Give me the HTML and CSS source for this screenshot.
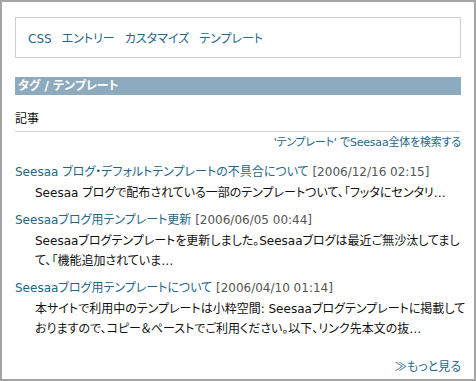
FILE: index.html
```html
<!DOCTYPE html>
<html lang="ja">
<head>
<meta charset="utf-8">
<title>タグ / テンプレート</title>
<link rel="stylesheet" href="styles.css">
</head>
<body>
<div class="frame">
  <div class="tagbox">
    <a class="tag" href="#">CSS</a>
    <a class="tag" href="#">エントリー</a>
    <a class="tag" href="#">カスタマイズ</a>
    <a class="tag" href="#">テンプレート</a>
  </div>
  <h2 class="bar">タグ / テンプレート</h2>
  <h3 class="sub">記事</h3>
  <div class="search"><a href="#">'テンプレート' でSeesaa全体を検索する</a></div>
  <div class="entry">
    <div class="title"><a href="#">Seesaa ブログ・デフォルトテンプレートの不具合について</a> <span class="date">[2006/12/16 02:15]</span></div>
    <div class="desc">Seesaa ブログで配布されている一部のテンプレートついて、「フッタにセンタリ…</div>
  </div>
  <div class="entry">
    <div class="title"><a href="#">Seesaaブログ用テンプレート更新</a> <span class="date">[2006/06/05 00:44]</span></div>
    <div class="desc">Seesaaブログテンプレートを更新しました。Seesaaブログは最近ご無沙汰してまし<br>て、「機能追加されていま…</div>
  </div>
  <div class="entry">
    <div class="title"><a href="#">Seesaaブログ用テンプレートについて</a> <span class="date">[2006/04/10 01:14]</span></div>
    <div class="desc">本サイトで利用中のテンプレートは小粋空間: Seesaaブログテンプレートに掲載して<br>おりますので、コピー＆ペーストでご利用ください。以下、リンク先本文の抜…</div>
  </div>
  <div class="more"><a href="#"><span class="arrow">≫</span>もっと見る</a></div>
</div>
</body>
</html>
```
FILE: styles.css
```css
html, body {
  margin: 0;
  padding: 0;
  background: #fff;
}
.frame {
  width: 476px;
  height: 381px;
  box-sizing: border-box;
  border: 2px solid #a4a4a4;
  padding: 15px 13px 0 13px;
  font-family: "DejaVu Sans", "Noto Sans CJK JP", sans-serif;
  font-size: 12px;
  font-feature-settings: "palt";
  color: #111;
  overflow: hidden;
}
a {
  color: #1d6787;
  text-decoration: none;
}
.tagbox {
  border: 1px solid #cfcfcf;
  padding: 12px 12px 9px;
  line-height: 18px;
  display: flex;
  gap: 10px;
}
.bar {
  margin: 19px 0 0;
  background: #8eaabe;
  color: #fff;
  font-size: 12px;
  font-weight: bold;
  line-height: 18px;
  padding-left: 3px;
}
.sub {
  margin: 14px 0 0;
  font-size: 12px;
  font-weight: normal;
  line-height: 20px;
  padding-bottom: 2px;
  border-bottom: 1px solid #cfcfcf;
}
.search {
  margin-top: 3px;
  text-align: right;
  font-size: 11px;
  line-height: 16px;
  letter-spacing: -0.2px;
}
.entry {
  margin-top: 7px;
}
.search + .entry {
  margin-top: 11px;
}
.title {
  line-height: 20px;
  white-space: nowrap;
}
.date {
  color: #555;
}
.desc {
  margin-top: 1px;
  padding-left: 20px;
  line-height: 20px;
  white-space: nowrap;
  color: #111;
}
.more {
  margin-top: 17px;
  text-align: right;
  line-height: 20px;
}
.arrow {
  font-family: "Noto Sans CJK JP", sans-serif;
  font-feature-settings: normal;
}
```
